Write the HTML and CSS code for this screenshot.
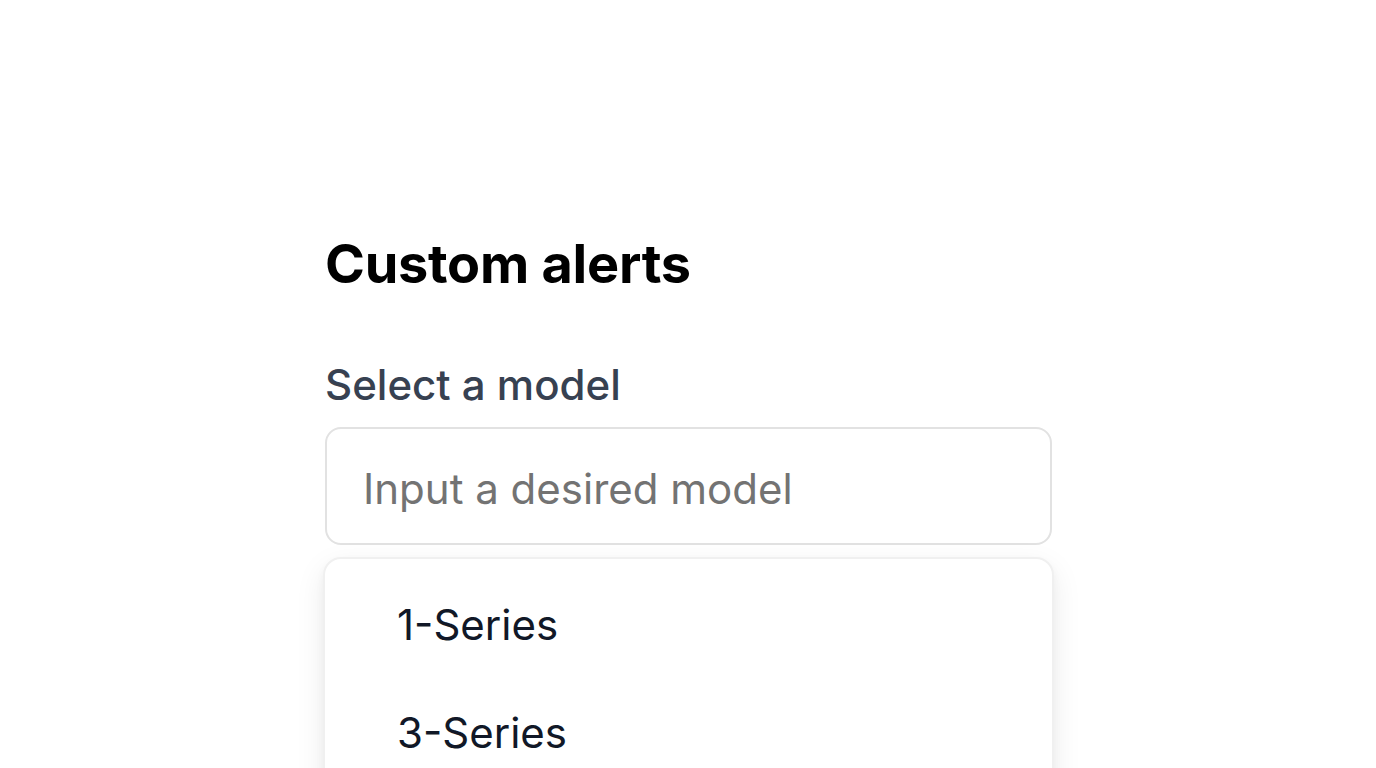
FILE: index.html
```html
<!DOCTYPE html>
<html lang="en">
<head>
<meta charset="utf-8">
<title>Custom alerts</title>
<link rel="stylesheet" href="styles.css">
</head>
<body>
<main class="page">
  <section class="panel">
    <h1 class="title">Custom alerts</h1>
    <label class="label" for="model">Select a model</label>
    <div class="combo">
      <input id="model" class="input" type="text" placeholder="Input a desired model">
      <ul class="menu">
        <li class="option">1-Series</li>
        <li class="option">3-Series</li>
        <li class="option">5-Series</li>
      </ul>
    </div>
  </section>
</main>
</body>
</html>
```
FILE: styles.css
```css
html, body {
  margin: 0;
  padding: 0;
  background: #ffffff;
  height: 100%;
  overflow: hidden;
}
body {
  font-family: Inter, "Noto Sans", sans-serif;
}
.page {
  display: flex;
  justify-content: flex-start;
  padding-left: 325px;
  padding-top: 228px;
}
.panel {
  width: 727px;
  display: flex;
  flex-direction: column;
}
.title {
  margin: 0;
  font-size: 54px;
  line-height: 72px;
  font-weight: 700;
  color: #000000;
  letter-spacing: -0.25px;
}
.label {
  margin-top: 59px;
  font-size: 42px;
  line-height: 52px;
  font-weight: 500;
  color: #374151;
}
.combo {
  margin-top: 16px;
  display: flex;
  flex-direction: column;
}
.input {
  box-sizing: border-box;
  width: 727px;
  height: 118px;
  border: 2px solid #e2e2e2;
  border-radius: 16px;
  padding: 4px 36px 0;
  font-family: Inter, "Noto Sans", sans-serif;
  font-size: 42px;
  color: #111827;
  outline: none;
}
.input::placeholder {
  color: #737373;
}
.menu {
  list-style: none;
  margin: 12px 0 0 -2px;
  padding: 12px 0;
  width: 731px;
  box-sizing: border-box;
  border: 2px solid #f0f0f0;
  border-radius: 18px;
  background: #ffffff;
  box-shadow: 0 10px 30px rgba(0, 0, 0, 0.08), 0 4px 8px rgba(0, 0, 0, 0.04);
}
.option {
  padding: 20px 72px;
  font-size: 42px;
  line-height: 68px;
  color: #111827;
}
```
